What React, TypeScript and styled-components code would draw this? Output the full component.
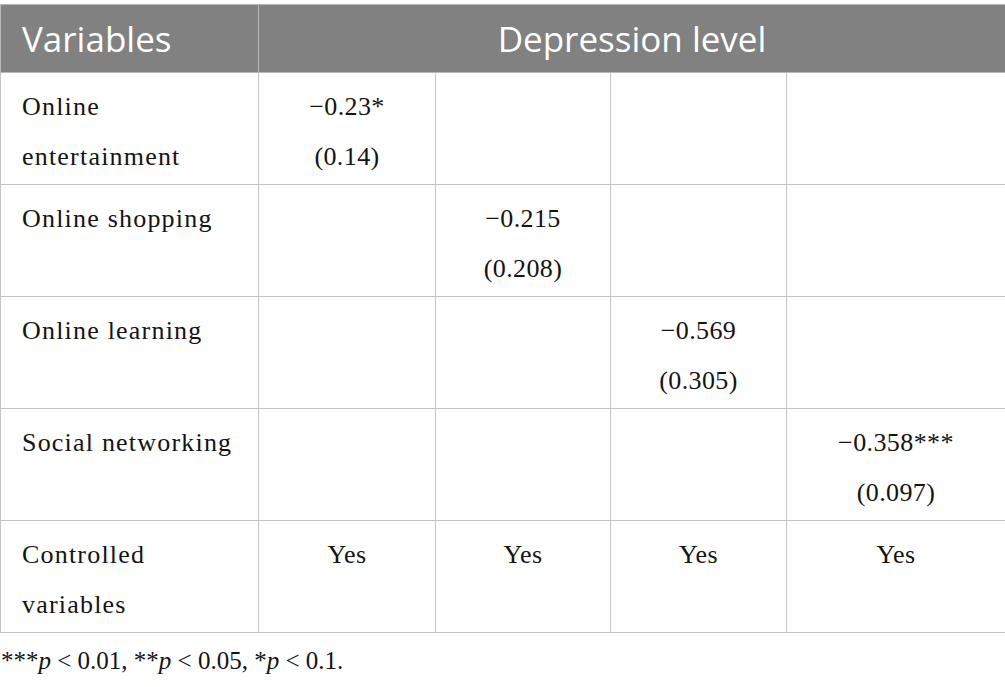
import React from "react";
import styled, { createGlobalStyle } from "styled-components";

const GlobalStyle = createGlobalStyle`
  html, body {
    margin: 0;
    padding: 0;
    background: #ffffff;
  }
  body {
    font-family: "Liberation Serif", "Times New Roman", serif;
    color: #141414;
  }
`;

const Page = styled.div`
  width: 1005px;
  padding-top: 4px;
  display: flex;
  flex-direction: column;
`;

const Table = styled.table`
  width: 1005px;
  border-collapse: collapse;
  table-layout: fixed;
`;

const HeadCell = styled.th<{ $align?: "left" | "center" }>`
  background: #808180;
  color: #ffffff;
  font-family: "Open Sans", "Noto Sans", sans-serif;
  font-weight: 400;
  font-size: 35px;
  line-height: 67px;
  height: 67px;
  padding: 0 21px;
  text-align: ${(p) => p.$align ?? "left"};
  border: 1px solid #b8b8b8;
  white-space: nowrap;
`;

const Cell = styled.td<{ $label?: boolean }>`
  border: 1px solid #c4c4c4;
  padding: 9px 21px 2px;
  height: 100px;
  vertical-align: top;
  font-family: "Liberation Serif", "Times New Roman", serif;
  font-weight: 400;
  font-size: 26px;
  line-height: 50px;
  letter-spacing: ${(p) => (p.$label ? "1.2px" : "0.4px")};
  text-align: ${(p) => (p.$label ? "left" : "center")};
  color: #141414;
`;

const Footnote = styled.p`
  margin: 13px 0 0 1px;
  font-family: "Liberation Serif", "Times New Roman", serif;
  font-size: 25px;
  line-height: 30px;
  color: #141414;
`;

const Ital = styled.i`
  font-style: italic;
`;

type Row = { label: string[]; values: (string[] | null)[] };

const rows: Row[] = [
  { label: ["Online", "entertainment"], values: [["−0.23*", "(0.14)"], null, null, null] },
  { label: ["Online shopping"], values: [null, ["−0.215", "(0.208)"], null, null] },
  { label: ["Online learning"], values: [null, null, ["−0.569", "(0.305)"], null] },
  { label: ["Social networking"], values: [null, null, null, ["−0.358***", "(0.097)"]] },
  { label: ["Controlled", "variables"], values: [["Yes"], ["Yes"], ["Yes"], ["Yes"]] },
];

const widths = [258, 177, 175, 176, 219];

function Lines({ items }: { items: string[] }) {
  return (
    <>
      {items.map((t, k) => (
        <React.Fragment key={k}>
          {k > 0 && <br />}
          {t}
        </React.Fragment>
      ))}
    </>
  );
}

export default function App() {
  return (
    <>
      <GlobalStyle />
      <Page>
        <Table>
          <colgroup>
            {widths.map((w, i) => (
              <col key={i} style={{ width: w }} />
            ))}
          </colgroup>
          <thead>
            <tr>
              <HeadCell>Variables</HeadCell>
              <HeadCell colSpan={4} $align="center">
                Depression level
              </HeadCell>
            </tr>
          </thead>
          <tbody>
            {rows.map((r, i) => (
              <tr key={i}>
                <Cell $label>
                  <Lines items={r.label} />
                </Cell>
                {r.values.map((v, j) => (
                  <Cell key={j}>{v && <Lines items={v} />}</Cell>
                ))}
              </tr>
            ))}
          </tbody>
        </Table>
        <Footnote>
          ***<Ital>p</Ital> &lt; 0.01, **<Ital>p</Ital> &lt; 0.05, *<Ital>p</Ital> &lt; 0.1.
        </Footnote>
      </Page>
    </>
  );
}
